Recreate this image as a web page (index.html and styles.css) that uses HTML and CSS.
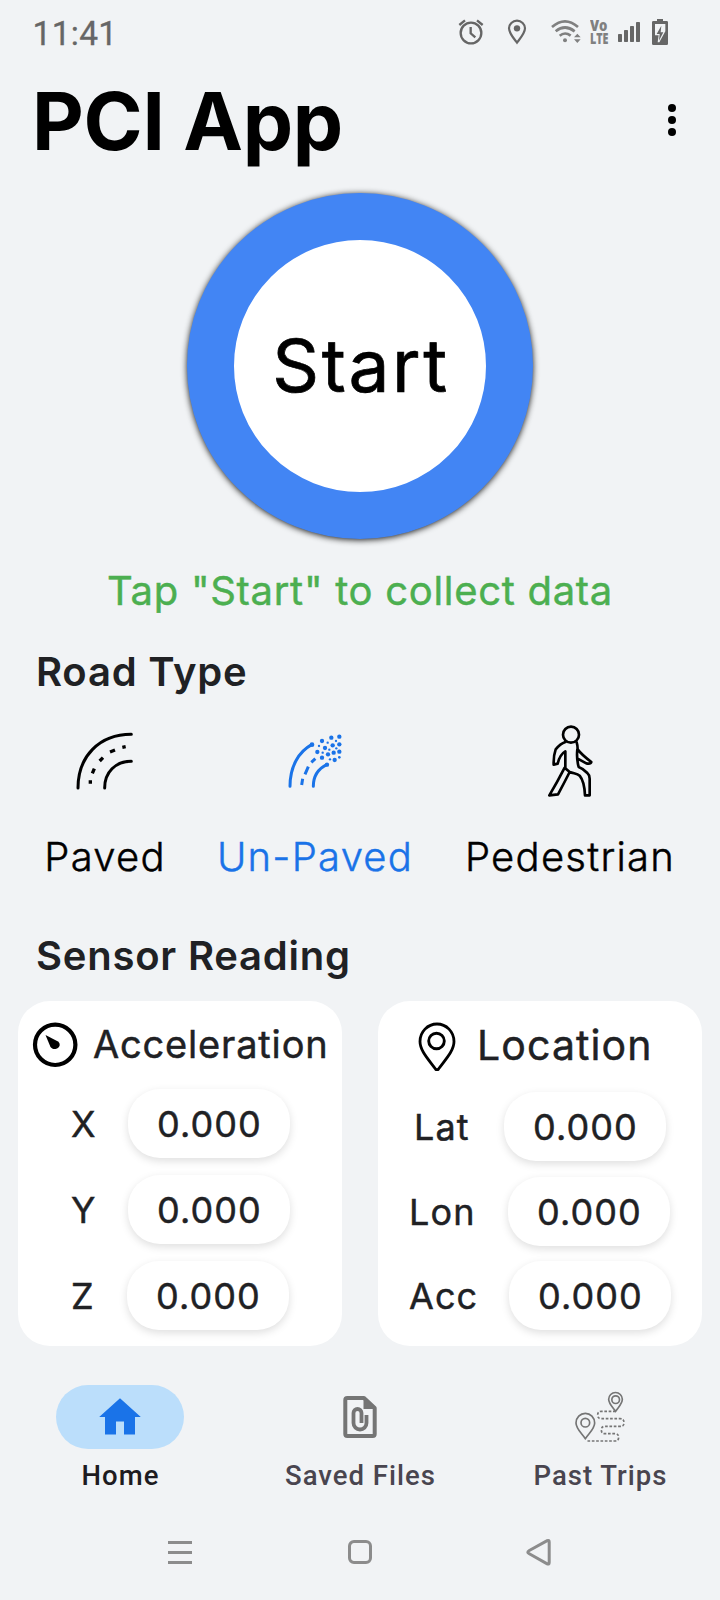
FILE: index.html
```html
<!DOCTYPE html>
<html lang="en">
<head>
<meta charset="utf-8">
<title>PCI App</title>
<link rel="stylesheet" href="styles.css">
</head>
<body>
<div class="screen">
  <div class="status-bar">
    <span class="clock">11:41</span>
    <div class="status-icons">
      <svg class="alarm" width="26" height="28" viewBox="54 54 78 84" fill="none" stroke="#666" stroke-width="7"><circle cx="93" cy="99" r="31"/><path d="M92 81v19l14 12M58 75l17-14M111 61l17 14"/></svg>
      <svg class="pin" width="20" height="28" viewBox="201 54 60 84"><path d="M231 128C217 110 207 99 207 85a24 23 0 0 1 48 0c0 14-10 25-24 43z" fill="none" stroke="#666" stroke-width="6.500"/><circle cx="231" cy="85" r="9.500" fill="#666"/></svg>
      <svg class="wifi" width="32" height="28" viewBox="330 54 96 84"><g fill="none" stroke="#808080" stroke-width="8"><path d="M336 81q39-34 78 0M347 94q28-23 57 0M359 107q16-13 33 0"/></g><circle cx="375" cy="121" r="6" fill="#808080"/><path d="M402 112l10-11 10 11zM402 118h20l-10 11z" fill="#808080"/></svg>
      <div class="volte"><span>Vo</span><span>LTE</span></div>
      <svg class="signal" width="24" height="28" viewBox="531 54 72 84" fill="#666"><rect x="534" y="102" width="12" height="24" rx="2"/><rect x="552" y="90" width="12" height="36" rx="2"/><rect x="570" y="78" width="12" height="48" rx="2"/><rect x="588" y="66" width="12" height="60" rx="2"/></svg>
      <svg width="18" height="28" viewBox="633 54 54 84"><path d="M651 57h18v6h11q4 0 4 4v64q0 4-4 4h-40q-4 0-4-4V67q0-4 4-4h11z" fill="#666"/><path d="M645 72h31v22l-18 33h-5l3-21h-11z" fill="#f1f3f5"/><path d="M664 77l-14 25h9l-2 20 13-25h-8z" fill="#666"/></svg>
    </div>
  </div>

  <header class="app-header">
    <h1 class="app-title">PCI App</h1>
    <svg class="more" width="24" height="40" viewBox="0 0 24 40"><circle cx="12" cy="7" r="4"/><circle cx="12" cy="19" r="4"/><circle cx="12" cy="31" r="4"/></svg>
  </header>

  <main>
    <button class="start-button">Start</button>
    <p class="hint">Tap "Start" to collect data</p>

    <h2 class="section-title">Road Type</h2>
    <div class="road-types">
      <div class="road-type">
        <svg width="100" height="100" viewBox="-15 0 300 300" fill="none" stroke="#000" stroke-width="9" stroke-linecap="round"><path d="M54 234C54 140 117 73 214 73M134 234c0-47 32-80 80-80"/><path d="M91 221v-10M97 190l6-14M119 153l10-10M150 126l15-6M187 112l10-2" stroke-linecap="butt" stroke-width="10"/></svg>
        <span class="road-label">Paved</span>
      </div>
      <div class="road-type selected">
        <svg width="100" height="100" viewBox="-15 0 300 300" fill="none" stroke="#1a73e8" stroke-width="9" stroke-linecap="round"><path d="M60 229C60 168 87 125 125 104M130 229c0-30 14-52 40-65"/><path d="M95 225l3-19M105 193l10-23M124 157l12-11" stroke-linecap="butt"/><g fill="#1a73e8" stroke="none"><circle cx="126" cy="104" r="7"/><circle cx="171" cy="164" r="6.500"/><circle cx="156" cy="93" r="6.500"/><circle cx="184" cy="83" r="6.500"/><circle cx="208" cy="80" r="6.500"/><circle cx="208" cy="103" r="6.500"/><circle cx="188" cy="106" r="6.500"/><circle cx="165" cy="114" r="6.500"/><circle cx="142" cy="126" r="6.500"/><circle cx="191" cy="128" r="6.500"/><circle cx="208" cy="125" r="6.500"/><circle cx="174" cy="133" r="6.500"/><circle cx="156" cy="143" r="6.500"/><circle cx="194" cy="150" r="6.500"/><circle cx="147" cy="108" r="3.500"/><circle cx="173" cy="98" r="3.500"/><circle cx="198" cy="93" r="3.500"/><circle cx="178" cy="119" r="3.500"/><circle cx="199" cy="115" r="3.500"/><circle cx="158" cy="128" r="3.500"/><circle cx="180" cy="148" r="3.500"/><circle cx="208" cy="142" r="4"/></g></svg>
        <span class="road-label">Un-Paved</span>
      </div>
      <div class="road-type">
        <svg width="100" height="100" viewBox="0 0 300 300" fill="none" stroke="#000" stroke-width="8" stroke-linejoin="round" stroke-linecap="round"><circle cx="153" cy="74" r="24"/><path d="M136 96q-15 5-29 22-7 20-6 46l12-3q6-27 23-37v50M170 97q3 9 3 21 12 16 41 38-2 7-15 4l-26-14M172 118q-3 28 4 53 14 5 26 18 7 6 7 17v50h-14c-1-25-4-44-16-59-8-7-18-6-30-11l-15-13q-23 45-46 83l26-3q20-37 35-67"/></svg>
        <span class="road-label">Pedestrian</span>
      </div>
    </div>

    <h2 class="section-title sensors-title">Sensor Reading</h2>
    <div class="cards">
      <section class="card accel">
        <div class="card-head">
          <svg width="46" height="46" viewBox="0 0 46 46"><circle cx="23.200" cy="22.800" r="20.200" fill="none" stroke="#000" stroke-width="4.200"/><path d="M13.500 13L26 19.500c3 2.500 2 6.500-2.500 7.500-2 .3-4-.5-5-2z"/></svg>
          <h3 class="card-title">Acceleration</h3>
        </div>
        <div class="reading x"><span class="axis">X</span><span class="value">0.000</span></div>
        <div class="reading y"><span class="axis">Y</span><span class="value">0.000</span></div>
        <div class="reading z"><span class="axis">Z</span><span class="value">0.000</span></div>
      </section>
      <section class="card location">
        <div class="card-head">
          <svg width="38" height="50" viewBox="0 0 38 50" fill="none" stroke="#000"><path d="M17.500 48C11 39 2 30 2 20.500a17 17.500 0 0 1 34 0C36 30 27 39 20.500 48q-1.500 1.800-3 0z" stroke-width="2.800"/><circle cx="18.500" cy="20" r="7.800" stroke-width="2.900"/></svg>
          <h3 class="card-title">Location</h3>
        </div>
        <div class="reading lat"><span class="axis">Lat</span><span class="value">0.000</span></div>
        <div class="reading lon"><span class="axis">Lon</span><span class="value">0.000</span></div>
        <div class="reading acc"><span class="axis">Acc</span><span class="value">0.000</span></div>
      </section>
    </div>
  </main>

  <nav class="tabs">
    <a class="tab active">
      <span class="tab-icon"><svg width="128" height="64" viewBox="0 0 128 64"><path d="M64 13.300L84.800 32H79v17.500H68V36.500h-8v13H49V32h-5.800z" fill="#1a73e8"/></svg></span>
      <span class="tab-label">Home</span>
    </a>
    <a class="tab">
      <span class="tab-icon"><svg width="80" height="64" viewBox="0 0 80 64" fill="none" stroke="#757575" stroke-width="4"><path d="M44 13H27.300q-2 0-2 2v34q0 2 2 2h25.400q2 0 2-2V23z" stroke-linejoin="round"/><path d="M43.500 12v12h12z" fill="#757575" stroke="none"/><path d="M46.500 30v8a6.500 6.500 0 0 1-13 0V28a4 4 0 0 1 8 0v10" stroke-width="3.800"/></svg></span>
      <span class="tab-label">Saved Files</span>
    </a>
    <a class="tab">
      <span class="tab-icon"><svg width="80" height="64" viewBox="0 15 240 192" fill="none" stroke="#757575" stroke-width="5"><path d="M76 176C62 157 48 145 48 129a28 29 0 0 1 56 0c0 16-14 28-28 47zM167 94C157 81 146 71 146 58a20.500 20.500 0 0 1 41 0c0 13-11 23-20 36z"/><circle cx="76" cy="128" r="13"/><circle cx="167" cy="59" r="11.500"/><path d="M167 94h-43q-11 0-11 11t11 11h56q12 0 12 12t-12 11h-45q-11 0-11 11t11 11h29q12 0 12 11t-12 11H80" stroke-dasharray="8 5"/></svg></span>
      <span class="tab-label">Past Trips</span>
    </a>
  </nav>

  <div class="system-nav">
    <svg width="30" height="30" viewBox="0 0 30 30" stroke="#8c8c8c" stroke-width="3"><path d="M3 5.500h24M3 15.500h24M3 25.500h24"/></svg>
    <svg width="30" height="30" viewBox="0 0 30 30" fill="none" stroke="#8c8c8c" stroke-width="3"><rect x="4.500" y="4.500" width="21" height="21" rx="4.500"/></svg>
    <svg width="30" height="30" viewBox="1.300 0 30 30" fill="none" stroke="#8c8c8c" stroke-width="3"><path d="M5.600 13.500L23.500 3.700q2-1 2 1.300v20.500q0 2.300-2 1.300L5.600 16.800q-3-1.600 0-3.300z"/></svg>
  </div>
</div>
</body>
</html>
```

FILE: styles.css
```css
* { box-sizing: border-box; margin: 0; padding: 0; }
body { background: #f1f3f5; font-family: Inter, "Liberation Sans", sans-serif; color: #202124; }
.screen { width: 720px; height: 1600px; overflow: hidden; display: flex; flex-direction: column; }
svg { display: block; flex: none; }

.status-bar { height: 64px; padding: 18px 51px 0 32.500px; display: flex; justify-content: space-between; align-items: flex-start; }
.clock { font: 400 33.500px/32px Roboto, sans-serif; letter-spacing: 0.300px; color: #666; -webkit-text-stroke: 0.300px; }
.status-icons { display: flex; }
.alarm, .pin { margin-right: 23px; }
.wifi, .volte { margin-right: 8px; }
.signal { margin-right: 10px; }
.volte { width: 19px; height: 28px; padding-top: 1px; font: 800 16px/13px "Open Sans", sans-serif; color: #808080; }
.volte span { display: block; width: max-content; transform-origin: 0 50%; }
.volte span:first-child { transform: scaleX(0.820); }
.volte span:last-child { transform: scaleX(0.670); }

.app-header { height: 128.500px; padding: 9px 36px 0 32px; display: flex; justify-content: space-between; }
.app-title { font-size: 80px; line-height: 96px; font-weight: 700; letter-spacing: -0.300px; color: #000; white-space: nowrap; }
.more { margin-top: 28px; }

.start-button { display: block; width: 346px; height: 346px; margin: 0 auto; border: 47px solid #4285f4; border-radius: 50%; background: #fff; color: #000; font: 400 73px/90px Inter, sans-serif; letter-spacing: 2.600px; text-indent: 2px; -webkit-text-stroke: 0.700px; text-align: center; white-space: nowrap; box-shadow: 0 1px 6px rgba(0, 0, 0, 0.9); }
.hint { margin-top: 28.500px; font-size: 40px; line-height: 48px; font-weight: 400; -webkit-text-stroke: 0.450px; text-align: center; color: #4caf50; white-space: nowrap; letter-spacing: 0.700px; }
.section-title { margin: 33px 0 0 36px; font-size: 40px; line-height: 48px; font-weight: 600; letter-spacing: 0.780px; }
.road-types { margin-top: 14px; display: grid; grid-template-columns: 210px 210px 300px; }
.road-type { display: flex; flex-direction: column; align-items: center; gap: 23px; color: #000; }
.road-type.selected { color: #1a73e8; }
.road-label { font-size: 40px; line-height: 48px; font-weight: 300; letter-spacing: 1.250px; -webkit-text-stroke: 0.450px; white-space: nowrap; }
.sensors-title { margin-top: 50.500px; }

.cards { margin-top: 21.500px; padding: 0 18px; display: flex; justify-content: space-between; }
.card { width: 324px; height: 345px; border-radius: 32px; background: #fff; }
.card-head { display: flex; align-items: flex-start; }
.accel .card-head { height: 88px; padding: 21px 0 0 14px; }
.location .card-head { height: 91px; padding: 20px 0 0 40px; }
.card-title { font-weight: 400; -webkit-text-stroke: 0.450px; white-space: nowrap; }
.accel .card-title { margin-left: 15px; font-size: 38px; line-height: 44px; letter-spacing: 0.820px; }
.location .card-title { margin-left: 21px; font-size: 41px; line-height: 48px; letter-spacing: 1.100px; }
.reading { display: flex; height: 69px; align-items: center; font-size: 36px; line-height: 46px; font-weight: 400; letter-spacing: 1.100px; -webkit-text-stroke: 0.450px; }
.axis { white-space: nowrap; padding-top: 1px; }
.value { width: 162px; height: 69px; line-height: 71px; text-indent: 1px; border-radius: 32px; text-align: center; background: #fff; box-shadow: 0 3px 8px rgba(0, 0, 0, 0.13); }
.accel .reading { padding-left: 53px; margin-bottom: 17px; }
.accel .axis { width: 57px; }
.accel .z .axis { width: 56px; }
.location .reading { margin-bottom: 15.500px; }
.location .lat { padding-left: 36px; }
.lat .axis { width: 90px; }
.location .lon { padding-left: 31px; }
.lon .axis { width: 99px; }
.location .acc { padding-left: 31px; }
.acc .axis { width: 100px; }

.tabs { margin-top: 39px; display: grid; grid-template-columns: repeat(3, 240px); font-family: Roboto, sans-serif; }
.tab { display: flex; flex-direction: column; align-items: center; gap: 11px; color: #49454f; }
.tab-icon { width: 128px; height: 64px; border-radius: 32px; display: flex; justify-content: center; }
.tab-label { padding-left: 1px; font-size: 27.500px; line-height: 32px; font-weight: 500; letter-spacing: 1px; white-space: nowrap; }
.active { color: #1d1b20; }
.active .tab-icon { background: #bbdefb; }

.system-nav { margin-top: 45px; padding: 0 90px; display: grid; grid-template-columns: repeat(3, 180px); justify-items: center; }
```
